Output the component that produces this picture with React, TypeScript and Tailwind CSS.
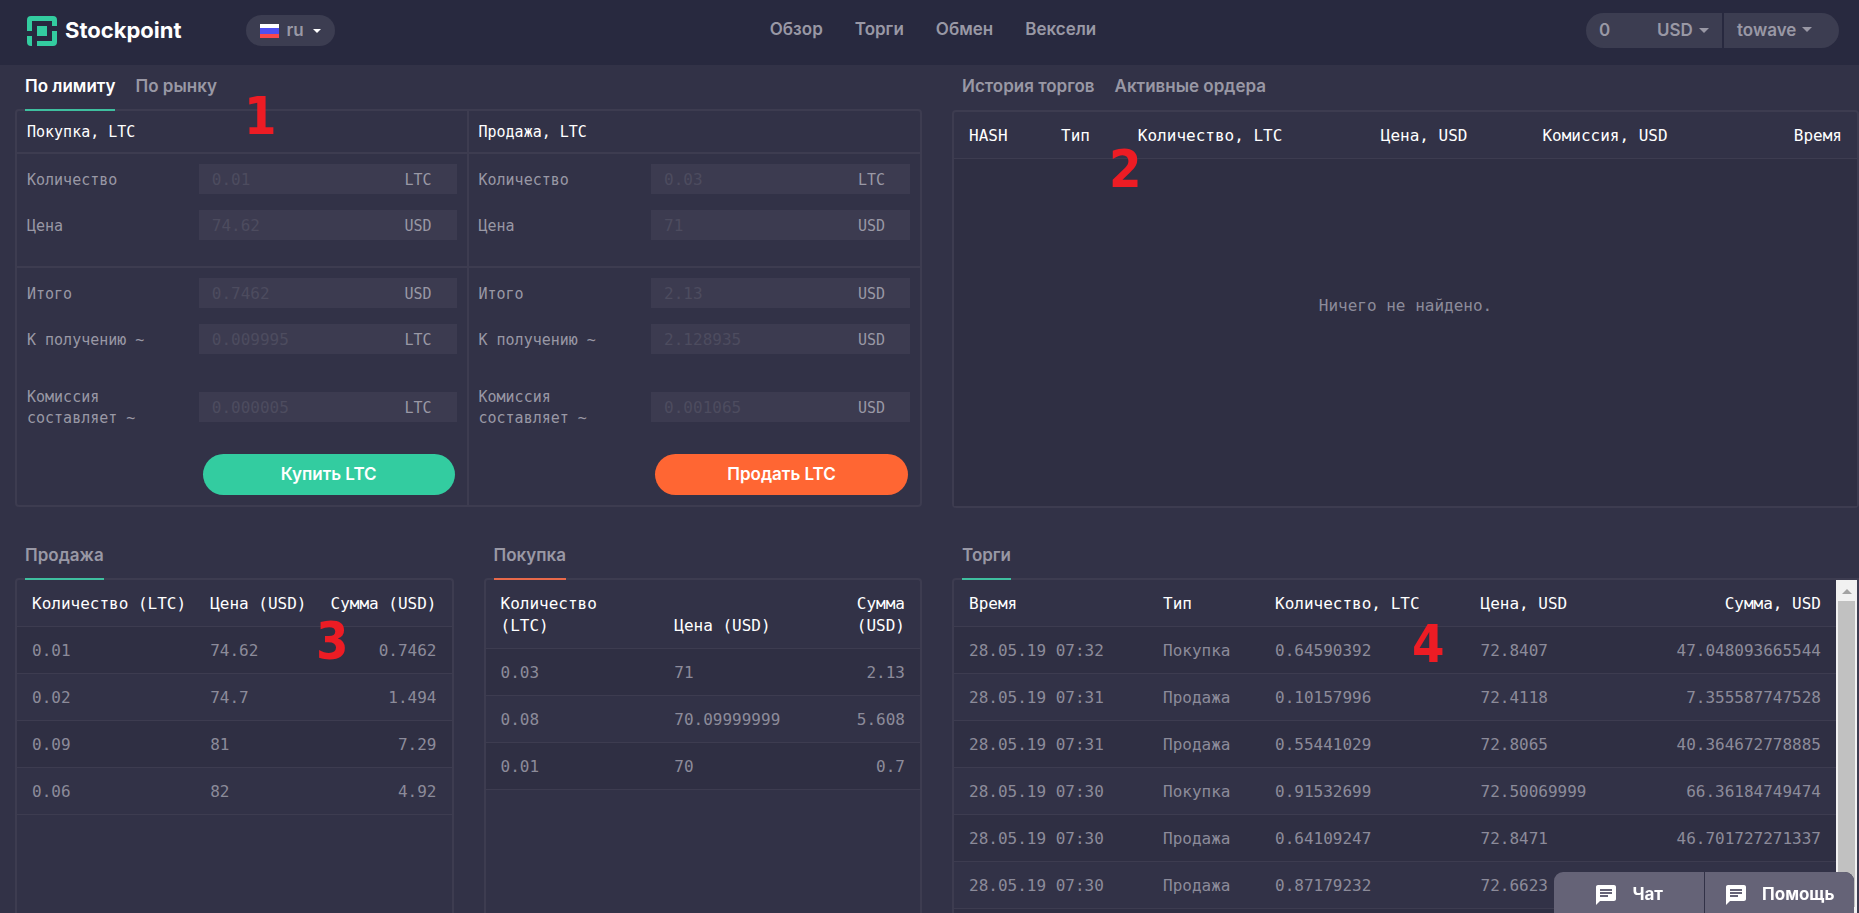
import type { ReactNode } from 'react';
import clsx from 'clsx';
import { MdChat } from 'react-icons/md';

type Field = { label: string; value: string; unit: string };

type Order = {
  id: string;
  title: string;
  submit: string;
  color: string;
  top: Field[];
  bottom: Field[];
};

type Column = { title: string; width: string; right?: boolean };

const nav = ['Обзор', 'Торги', 'Обмен', 'Вексели'];

const orders: Order[] = [
  {
    id: 'buy',
    title: 'Покупка, LTC',
    submit: 'Купить LTC',
    color: 'bg-[#33cca0]',
    top: [
      { label: 'Количество', value: '0.01', unit: 'LTC' },
      { label: 'Цена', value: '74.62', unit: 'USD' },
    ],
    bottom: [
      { label: 'Итого', value: '0.7462', unit: 'USD' },
      { label: 'К получению ~', value: '0.009995', unit: 'LTC' },
      { label: 'Комиссия составляет ~', value: '0.000005', unit: 'LTC' },
    ],
  },
  {
    id: 'sell',
    title: 'Продажа, LTC',
    submit: 'Продать LTC',
    color: 'bg-[#ff6633]',
    top: [
      { label: 'Количество', value: '0.03', unit: 'LTC' },
      { label: 'Цена', value: '71', unit: 'USD' },
    ],
    bottom: [
      { label: 'Итого', value: '2.13', unit: 'USD' },
      { label: 'К получению ~', value: '2.128935', unit: 'USD' },
      { label: 'Комиссия составляет ~', value: '0.001065', unit: 'USD' },
    ],
  },
];

const historyColumns: Column[] = [
  { title: 'HASH', width: 'w-[10.2%]' },
  { title: 'Тип', width: 'w-[8.5%]' },
  { title: 'Количество, LTC', width: 'w-[26.9%]' },
  { title: 'Цена, USD', width: 'w-[17.9%]' },
  { title: 'Комиссия, USD', width: 'w-[20.5%]' },
  { title: 'Время', width: 'w-[16%]', right: true },
];

const sellColumns: Column[] = [
  { title: 'Количество (LTC)', width: 'w-[41%] whitespace-nowrap' },
  { title: 'Цена (USD)', width: 'w-[27%] whitespace-nowrap' },
  { title: 'Сумма (USD)', width: 'w-[32%] whitespace-nowrap', right: true },
];

const buyColumns: Column[] = [
  { title: 'Количество (LTC)', width: 'w-[40%]' },
  { title: 'Цена (USD)', width: 'w-[32%]' },
  { title: 'Сумма (USD)', width: 'w-[28%]', right: true },
];

const tradeColumns: Column[] = [
  { title: 'Время', width: 'w-[22%]' },
  { title: 'Тип', width: 'w-[12.7%]' },
  { title: 'Количество, LTC', width: 'w-[23.3%]' },
  { title: 'Цена, USD', width: 'w-[18%]' },
  { title: 'Сумма, USD', width: 'w-[24%]', right: true },
];

const sells = [
  ['0.01', '74.62', '0.7462'],
  ['0.02', '74.7', '1.494'],
  ['0.09', '81', '7.29'],
  ['0.06', '82', '4.92'],
];

const buys = [
  ['0.03', '71', '2.13'],
  ['0.08', '70.09999999', '5.608'],
  ['0.01', '70', '0.7'],
];

const trades = [
  ['28.05.19 07:32', 'Покупка', '0.64590392', '72.8407', '47.048093665544'],
  ['28.05.19 07:31', 'Продажа', '0.10157996', '72.4118', '7.355587747528'],
  ['28.05.19 07:31', 'Продажа', '0.55441029', '72.8065', '40.364672778885'],
  ['28.05.19 07:30', 'Покупка', '0.91532699', '72.50069999', '66.36184749474'],
  ['28.05.19 07:30', 'Продажа', '0.64109247', '72.8471', '46.701727271337'],
  ['28.05.19 07:30', 'Продажа', '0.87179232', '72.6623', ''],
  ['', '', '', '', ''],
];

function Caret({ className }: { className: string }) {
  return (
    <svg viewBox="0 0 10 5" className={clsx('fill-current', className)} aria-hidden="true">
      <path d="M0 0h10L5 5z" />
    </svg>
  );
}

function Logo() {
  return (
    <a href="#" className="flex items-center gap-2 text-[22px] font-bold text-white">
      <svg viewBox="0 0 30 30" className="size-[30px] fill-[#33cca0]" aria-hidden="true">
        <path d="M0 15V4a4 4 0 0 1 4-4h22a4 4 0 0 1 4 4v6h-5V5H5v10z" />
        <path d="M30 15v11a4 4 0 0 1-4 4H10v-5h15V15z" />
        <path d="M0 20h5v10H4a4 4 0 0 1-4-4z" />
        <path d="M10 10h10v10H10z" />
      </svg>
      Stockpoint
    </a>
  );
}

function Header() {
  return (
    <header className="grid h-[65px] shrink-0 grid-cols-[1fr_auto_1fr] items-start bg-[#28293f] pl-[27px] pr-5 text-[17px] font-semibold text-[#9998a5]">
      <div className="flex h-[61px] items-center gap-16">
        <Logo />
        <label className="flex h-[31px] items-center rounded-full bg-[#3c3d51] px-[14px]">
          <svg viewBox="0 0 19 14" className="mr-2 h-[14px] w-[19px]" aria-hidden="true">
            <path fill="#fff" d="M0 0h19v5H0z" />
            <path fill="#4f4ff0" d="M0 4h19v6H0z" />
            <path fill="#f9484b" d="M0 10h19v4H0z" />
          </svg>
          <select aria-label="Язык" className="appearance-none bg-transparent outline-none">
            <option>ru</option>
          </select>
          <Caret className="ml-2 h-[4px] w-[8px] text-white" />
        </label>
      </div>
      <nav className="flex h-[59px] items-center gap-8">
        {nav.map((item) => (
          <a key={item} href="#">
            {item}
          </a>
        ))}
      </nav>
      <div className="flex h-[61px] items-center justify-end gap-[2px]">
        <label className="flex h-[35px] w-[136px] items-center rounded-l-full bg-[#3c3d51] px-[13px]">
          <span className="flex-1">0</span>
          <select aria-label="Валюта" className="appearance-none bg-transparent outline-none">
            <option>USD</option>
          </select>
          <Caret className="ml-[6px] h-[5px] w-[10px]" />
        </label>
        <button type="button" className="flex h-[35px] w-[115px] items-center rounded-r-full bg-[#3c3d51] pl-[13px]">
          towave
          <Caret className="mb-[3px] ml-[6px] h-[5px] w-[10px]" />
        </button>
      </div>
    </header>
  );
}

function Tabs({ items, active, line = 'border-[#3fbf9f]' }: { items: string[]; active?: string; line?: string }) {
  return (
    <div className="relative z-10 -mb-[2px] flex gap-5 px-[10px] text-[17px] font-semibold">
      {items.map((item) => (
        <button
          key={item}
          type="button"
          className={clsx(
            'h-[46px] border-b-2',
            item === active ? line : 'border-transparent',
            item === active && items.length > 1 ? 'text-white' : 'text-[#9998a5]'
          )}
        >
          {item}
        </button>
      ))}
    </div>
  );
}

function FieldRow({ id, field }: { id: string; field: Field }) {
  return (
    <div className="grid grid-cols-[2fr_3fr] items-center">
      <label htmlFor={id} className="pr-8 pt-[2px] leading-[21px]">
        {field.label}
      </label>
      <div className="flex h-[30px] items-center bg-[#3c3b50] pl-[13px] pr-[25px] pt-[2px]">
        <input
          id={id}
          placeholder={field.value}
          className="w-full min-w-0 bg-transparent text-base outline-none placeholder:text-[#4d4c5f]"
        />
        <span>{field.unit}</span>
      </div>
    </div>
  );
}

function OrderForm({ order }: { order: Order }) {
  return (
    <form className="text-[15px] text-[#9998a5]">
      <h2 className="flex h-[43px] items-center border-b-2 border-[#3d3c50] px-[10px] pt-[2px] text-white">{order.title}</h2>
      <div className="space-y-4 border-b-2 border-[#3d3c50] px-[10px] pb-[26px] pt-[10px]">
        {order.top.map((field, i) => (
          <FieldRow key={field.label} id={`${order.id}-top-${i}`} field={field} />
        ))}
      </div>
      <div className="px-[10px] py-[10px]">
        <div className="space-y-4">
          {order.bottom.slice(0, 2).map((field, i) => (
            <FieldRow key={field.label} id={`${order.id}-bottom-${i}`} field={field} />
          ))}
        </div>
        <div className="pb-[25px] pt-[31px]">
          <FieldRow id={`${order.id}-fee`} field={order.bottom[2]} />
        </div>
        <div className="ml-[40%] pl-1 pr-[2px]">
          <button
            type="button"
            className={clsx('h-[41px] w-full rounded-full font-["Inter",sans-serif] text-[17px] font-semibold text-white', order.color)}
          >
            {order.submit}
          </button>
        </div>
      </div>
    </form>
  );
}

function DataTable({ columns, rows, children }: { columns: Column[]; rows: string[][]; children?: ReactNode }) {
  return (
    <table className="w-full table-fixed text-base leading-[22px] text-[#8c8b9a]">
      <thead className="text-white">
        <tr className="border-b border-[#3d3c50]">
          {columns.map((col) => (
            <th
              key={col.title}
              className={clsx('px-[15px] pb-[11px] pt-[13px] align-bottom font-normal', col.width, col.right ? 'text-right' : 'text-left')}
            >
              {col.title}
            </th>
          ))}
        </tr>
      </thead>
      <tbody>
        {rows.map((row, i) => (
          <tr key={i} className="h-[47px] border-b border-[#3d3c50] odd:bg-[#2f2f43]">
            {row.map((cell, j) => (
              <td key={j} className={clsx('px-[15px] pb-[11px] pt-[13px]', columns[j].right && 'text-right')}>
                {cell}
              </td>
            ))}
          </tr>
        ))}
        {children}
      </tbody>
    </table>
  );
}

function Scrollbar() {
  return (
    <div className="flex w-[21px] shrink-0 flex-col bg-[#f1f1f1] px-[2px] pb-[6px]" aria-hidden="true">
      <div className="flex h-[21px] items-center justify-center text-[#a3a3a3]">
        <Caret className="mt-[2px] h-[5px] w-[10px] rotate-180" />
      </div>
      <div className="flex-1 bg-[#c1c1c1]" />
    </div>
  );
}

function Mark({ className, children }: { className: string; children: ReactNode }) {
  return (
    <span
      className={clsx(
        'absolute z-20 font-["DejaVu_Sans_Condensed","DejaVu_Sans",sans-serif] text-[52px] font-bold leading-none text-[#ed1c24]',
        className
      )}
    >
      {children}
    </span>
  );
}

function ChatBar() {
  return (
    <div className="fixed bottom-0 right-[5px] z-30 flex h-[41px] w-[300px] gap-px overflow-hidden rounded-t-[9px] bg-[#323247] text-[17px] font-bold text-white">
      {['Чат', 'Помощь'].map((item) => (
        <button key={item} type="button" className="flex flex-1 items-center justify-center gap-[14px] bg-[#656377] pt-1">
          <MdChat className="size-6" />
          {item}
        </button>
      ))}
    </div>
  );
}

const panel = 'border-2 border-[#3d3c50] font-["DejaVu_Sans_Mono",monospace]';

export default function App() {
  return (
    <div className="relative flex h-screen flex-col overflow-hidden bg-[#323247] font-['Inter',sans-serif]">
      <Header />
      <main className="flex min-h-0 flex-1 flex-col gap-[26px] pl-[15px]">
        <div className="grid grid-cols-2 items-start gap-[30px]">
          <section className="relative">
            <Tabs items={['По лимиту', 'По рынку']} active="По лимиту" />
            <div className={clsx(panel, 'grid grid-cols-2 divide-x-2 divide-[#3d3c50] rounded-[4px]')}>
              {orders.map((order) => (
                <OrderForm key={order.id} order={order} />
              ))}
            </div>
            <Mark className="left-[229px] top-[25px]">1</Mark>
          </section>
          <section className="relative">
            <Tabs items={['История торгов', 'Активные ордера']} />
            <div className={clsx(panel, 'mt-px rounded-[4px]')}>
              <DataTable columns={historyColumns} rows={[]}>
                <tr className="bg-[#2f2f43]">
                  <td colSpan={6} className="h-[347px] pb-[52px] text-center">
                    Ничего не найдено.
                  </td>
                </tr>
              </DataTable>
            </div>
            <Mark className="left-[157px] top-[78px]">2</Mark>
          </section>
        </div>
        <div className="grid min-h-0 flex-1 grid-cols-2 gap-[30px]">
          <div className="grid min-h-0 grid-cols-2 gap-[30px]">
            <section className="relative flex min-h-0 flex-col">
              <Tabs items={['Продажа']} active="Продажа" />
              <div className={clsx(panel, 'min-h-0 flex-1 rounded-t-[4px] border-b-0')}>
                <DataTable columns={sellColumns} rows={sells} />
              </div>
              <Mark className="left-[301px] top-[81px]">3</Mark>
            </section>
            <section className="flex min-h-0 flex-col">
              <Tabs items={['Покупка']} active="Покупка" line="border-[#e8694a]" />
              <div className={clsx(panel, 'min-h-0 flex-1 rounded-t-[4px] border-b-0')}>
                <DataTable columns={buyColumns} rows={buys} />
              </div>
            </section>
          </div>
          <section className="relative flex min-h-0 flex-col">
            <Tabs items={['Торги']} active="Торги" />
            <div className={clsx(panel, 'flex min-h-0 flex-1 overflow-hidden rounded-tl-[4px] border-b-0')}>
              <div className="min-w-0 flex-1">
                <DataTable columns={tradeColumns} rows={trades} />
              </div>
              <Scrollbar />
            </div>
            <Mark className="left-[460px] top-[84px]">4</Mark>
          </section>
        </div>
      </main>
      <ChatBar />
    </div>
  );
}
